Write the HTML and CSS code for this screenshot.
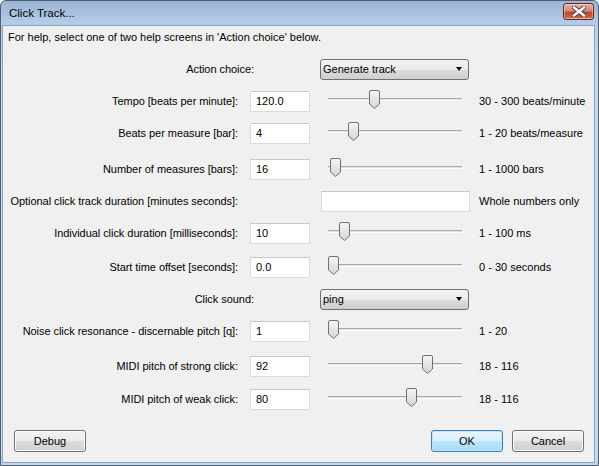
FILE: index.html
```html
<!DOCTYPE html>
<html>
<head>
<meta charset="utf-8">
<title>Click Track...</title>
<link rel="stylesheet" href="styles.css">
</head>
<body>
<svg width="0" height="0" class="defs">
  <defs>
    <linearGradient id="tg" x1="0" y1="0" x2="0" y2="1">
      <stop offset="0" stop-color="#f6f6f6"/>
      <stop offset="1" stop-color="#d4d4d4"/>
    </linearGradient>
    <symbol id="thumb" viewBox="0 0 11 19">
      <path d="M0.5 2 Q0.5 0.5 2 0.5 H9 Q10.5 0.5 10.5 2 V14 L5.5 18.5 L0.5 14 Z" fill="url(#tg)" stroke="#707070" stroke-width="1"/>
    </symbol>
  </defs>
</svg>
<div class="window">
  <div class="titlebar">
    <span class="title">Click Track...</span>
    <button class="close" aria-label="Close">
      <svg width="14" height="11" viewBox="0 0 14 11">
        <path d="M2 1.5 L12 9.5 M12 1.5 L2 9.5" stroke="#3a3a3a" stroke-width="4.2" stroke-linecap="square"/>
        <path d="M2 1.5 L12 9.5 M12 1.5 L2 9.5" stroke="#ffffff" stroke-width="2.4" stroke-linecap="square"/>
      </svg>
    </button>
  </div>
  <div class="client">
    <p class="help">For help, select one of two help screens in 'Action choice' below.</p>
    <div class="form">
      <div class="label wide">Action choice:</div>
      <div class="cell c3"><div class="choice"><span>Generate track</span><i class="arrow"></i></div></div>

      <div class="label">Tempo [beats per minute]:</div>
      <div class="cell"><div class="text">120.0</div></div>
      <div class="cell"><div class="slider"><div class="groove"></div><div class="rail"><svg class="thumb" style="left:33.33%"><use href="#thumb"/></svg></div></div></div>
      <div class="cell range">30 - 300 beats/minute</div>

      <div class="label">Beats per measure [bar]:</div>
      <div class="cell"><div class="text">4</div></div>
      <div class="cell"><div class="slider"><div class="groove"></div><div class="rail"><svg class="thumb" style="left:15.79%"><use href="#thumb"/></svg></div></div></div>
      <div class="cell range">1 - 20 beats/measure</div>

      <div class="label">Number of measures [bars]:</div>
      <div class="cell"><div class="text">16</div></div>
      <div class="cell"><div class="slider"><div class="groove"></div><div class="rail"><svg class="thumb" style="left:1.5%"><use href="#thumb"/></svg></div></div></div>
      <div class="cell range">1 - 1000 bars</div>

      <div class="label">Optional click track duration [minutes seconds]:</div>
      <div class="cell c3"><div class="text long"></div></div>
      <div class="cell range">Whole numbers only</div>

      <div class="label">Individual click duration [milliseconds]:</div>
      <div class="cell"><div class="text">10</div></div>
      <div class="cell"><div class="slider"><div class="groove"></div><div class="rail"><svg class="thumb" style="left:9.09%"><use href="#thumb"/></svg></div></div></div>
      <div class="cell range">1 - 100 ms</div>

      <div class="label">Start time offset [seconds]:</div>
      <div class="cell"><div class="text">0.0</div></div>
      <div class="cell"><div class="slider"><div class="groove"></div><div class="rail"><svg class="thumb" style="left:0%"><use href="#thumb"/></svg></div></div></div>
      <div class="cell range">0 - 30 seconds</div>

      <div class="label wide">Click sound:</div>
      <div class="cell c3"><div class="choice"><span>ping</span><i class="arrow"></i></div></div>

      <div class="label">Noise click resonance - discernable pitch [q]:</div>
      <div class="cell"><div class="text">1</div></div>
      <div class="cell"><div class="slider"><div class="groove"></div><div class="rail"><svg class="thumb" style="left:0%"><use href="#thumb"/></svg></div></div></div>
      <div class="cell range">1 - 20</div>

      <div class="label">MIDI pitch of strong click:</div>
      <div class="cell"><div class="text">92</div></div>
      <div class="cell"><div class="slider"><div class="groove"></div><div class="rail"><svg class="thumb" style="left:75.5%"><use href="#thumb"/></svg></div></div></div>
      <div class="cell range">18 - 116</div>

      <div class="label">MIDI pitch of weak click:</div>
      <div class="cell"><div class="text">80</div></div>
      <div class="cell"><div class="slider"><div class="groove"></div><div class="rail"><svg class="thumb" style="left:63.3%"><use href="#thumb"/></svg></div></div></div>
      <div class="cell range">18 - 116</div>
    </div>
    <div class="buttons">
      <button class="btn">Debug</button>
      <span class="spacer"></span>
      <button class="btn default">OK</button>
      <button class="btn">Cancel</button>
    </div>
  </div>
</div>
</body>
</html>
```

FILE: styles.css
```css
* { box-sizing: border-box; }
html, body { margin: 0; padding: 0; }
body {
  font-family: "Liberation Sans", Arial, sans-serif;
  font-size: 11px;
  color: #000;
  background: #ffffff;
}
.defs { position: absolute; width: 0; height: 0; }
.window {
  width: 599px;
  height: 466px;
  border: 1px solid #4f5d6e;
  border-radius: 6px 6px 0 0;
  background: linear-gradient(to bottom, #9ab5d5 0px, #b6cee8 24px, #c4d9ef 60px, #c4d9ef 100%);
  padding: 0 3px 2px 1px;
  display: flex;
  flex-direction: column;
  overflow: hidden;
}
.titlebar {
  height: 24px;
  flex: none;
  display: flex;
  align-items: center;
  padding-left: 7px;
  padding-right: 1px;
}
.title {
  flex: 1;
  font-size: 11.5px;
  color: #000;
}
.close {
  width: 31px;
  height: 17px;
  margin-top: -3px;
  padding: 0;
  border: 1px solid #5e2a22;
  border-radius: 3px;
  background: linear-gradient(to bottom, #e8b0a2 0%, #d8877a 45%, #c04a34 55%, #c95a44 85%, #d98a6c 100%);
  box-shadow: inset 0 0 0 1px rgba(255,255,255,0.35);
  display: flex;
  align-items: center;
  justify-content: center;
}
.client {
  flex: 1;
  background: #f0f0f0;
  border: 1px solid #8ea3bb;
  display: flex;
  flex-direction: column;
}
.help {
  margin: 4px 0 0 5px;
  line-height: 14px;
}
.form {
  margin-top: 14px;
  padding-left: 5px;
  display: grid;
  grid-template-columns: 242px 70px 159px 1fr;
  grid-template-rows: 32px 32px 36px 32px 32px 34px 32px 32px 35px 33px 22px;
  align-items: start;
}
.label, .cell {
  height: 22px;
  display: flex;
  align-items: center;
}
.label {
  grid-column: 1;
  justify-content: flex-end;
  padding-right: 12px;
  white-space: nowrap;
  letter-spacing: -0.05px;
}
.label.wide {
  grid-column: 1 / 3;
  padding-right: 66px;
}
.cell.c3 { grid-column: 3; }
.range { grid-column: 4; white-space: nowrap; }
.text {
  width: 60px;
  height: 21px;
  background: #fff;
  border: 1px solid #dadada;
  border-top-color: #c8c8c8;
  padding-left: 5px;
  line-height: 19px;
}
.text.long { width: 149px; margin-left: 1px; }
.choice {
  width: 149px;
  height: 21px;
  border: 1px solid #707070;
  border-radius: 3px;
  background: linear-gradient(to bottom, #f2f2f2 0%, #ebebeb 50%, #dddddd 51%, #cfcfcf 100%);
  display: flex;
  align-items: center;
  padding-left: 2px;
}
.choice span { flex: 1; }
.arrow {
  width: 0;
  height: 0;
  border-left: 3.5px solid transparent;
  border-right: 3.5px solid transparent;
  border-top: 4px solid #000;
  margin-right: 6px;
}
.slider {
  width: 150px;
  height: 22px;
  position: relative;
}
.groove {
  position: absolute;
  left: 8px;
  right: 8px;
  top: 8px;
  height: 3px;
  border-top: 1px solid #a9a9a9;
  border-bottom: 1px solid #ffffff;
  background: #e3e3e3;
}
.rail {
  position: absolute;
  left: 8px;
  width: 124px;
  top: 0;
  height: 22px;
}
.thumb {
  position: absolute;
  top: 0;
  width: 11px;
  height: 19px;
}
.buttons {
  margin-top: auto;
  padding: 0 10px 10px 11px;
  display: flex;
  gap: 9px;
}
.spacer { flex: 1; }
.btn {
  width: 72px;
  height: 22px;
  font-family: inherit;
  font-size: 11px;
  color: #000;
  border: 1px solid #707070;
  border-radius: 3px;
  background: linear-gradient(to bottom, #f2f2f2 0%, #ebebeb 50%, #dddddd 51%, #cfcfcf 100%);
  box-shadow: inset 0 0 0 1px #fcfcfc;
  padding: 0;
}
.btn.default {
  border-color: #3c7fb1;
  background: linear-gradient(to bottom, #eaf6fd 0%, #d9f0fc 50%, #bee6fd 51%, #a7d9f5 100%);
  box-shadow: inset 0 0 0 1px #c2e4f7;
}
```
